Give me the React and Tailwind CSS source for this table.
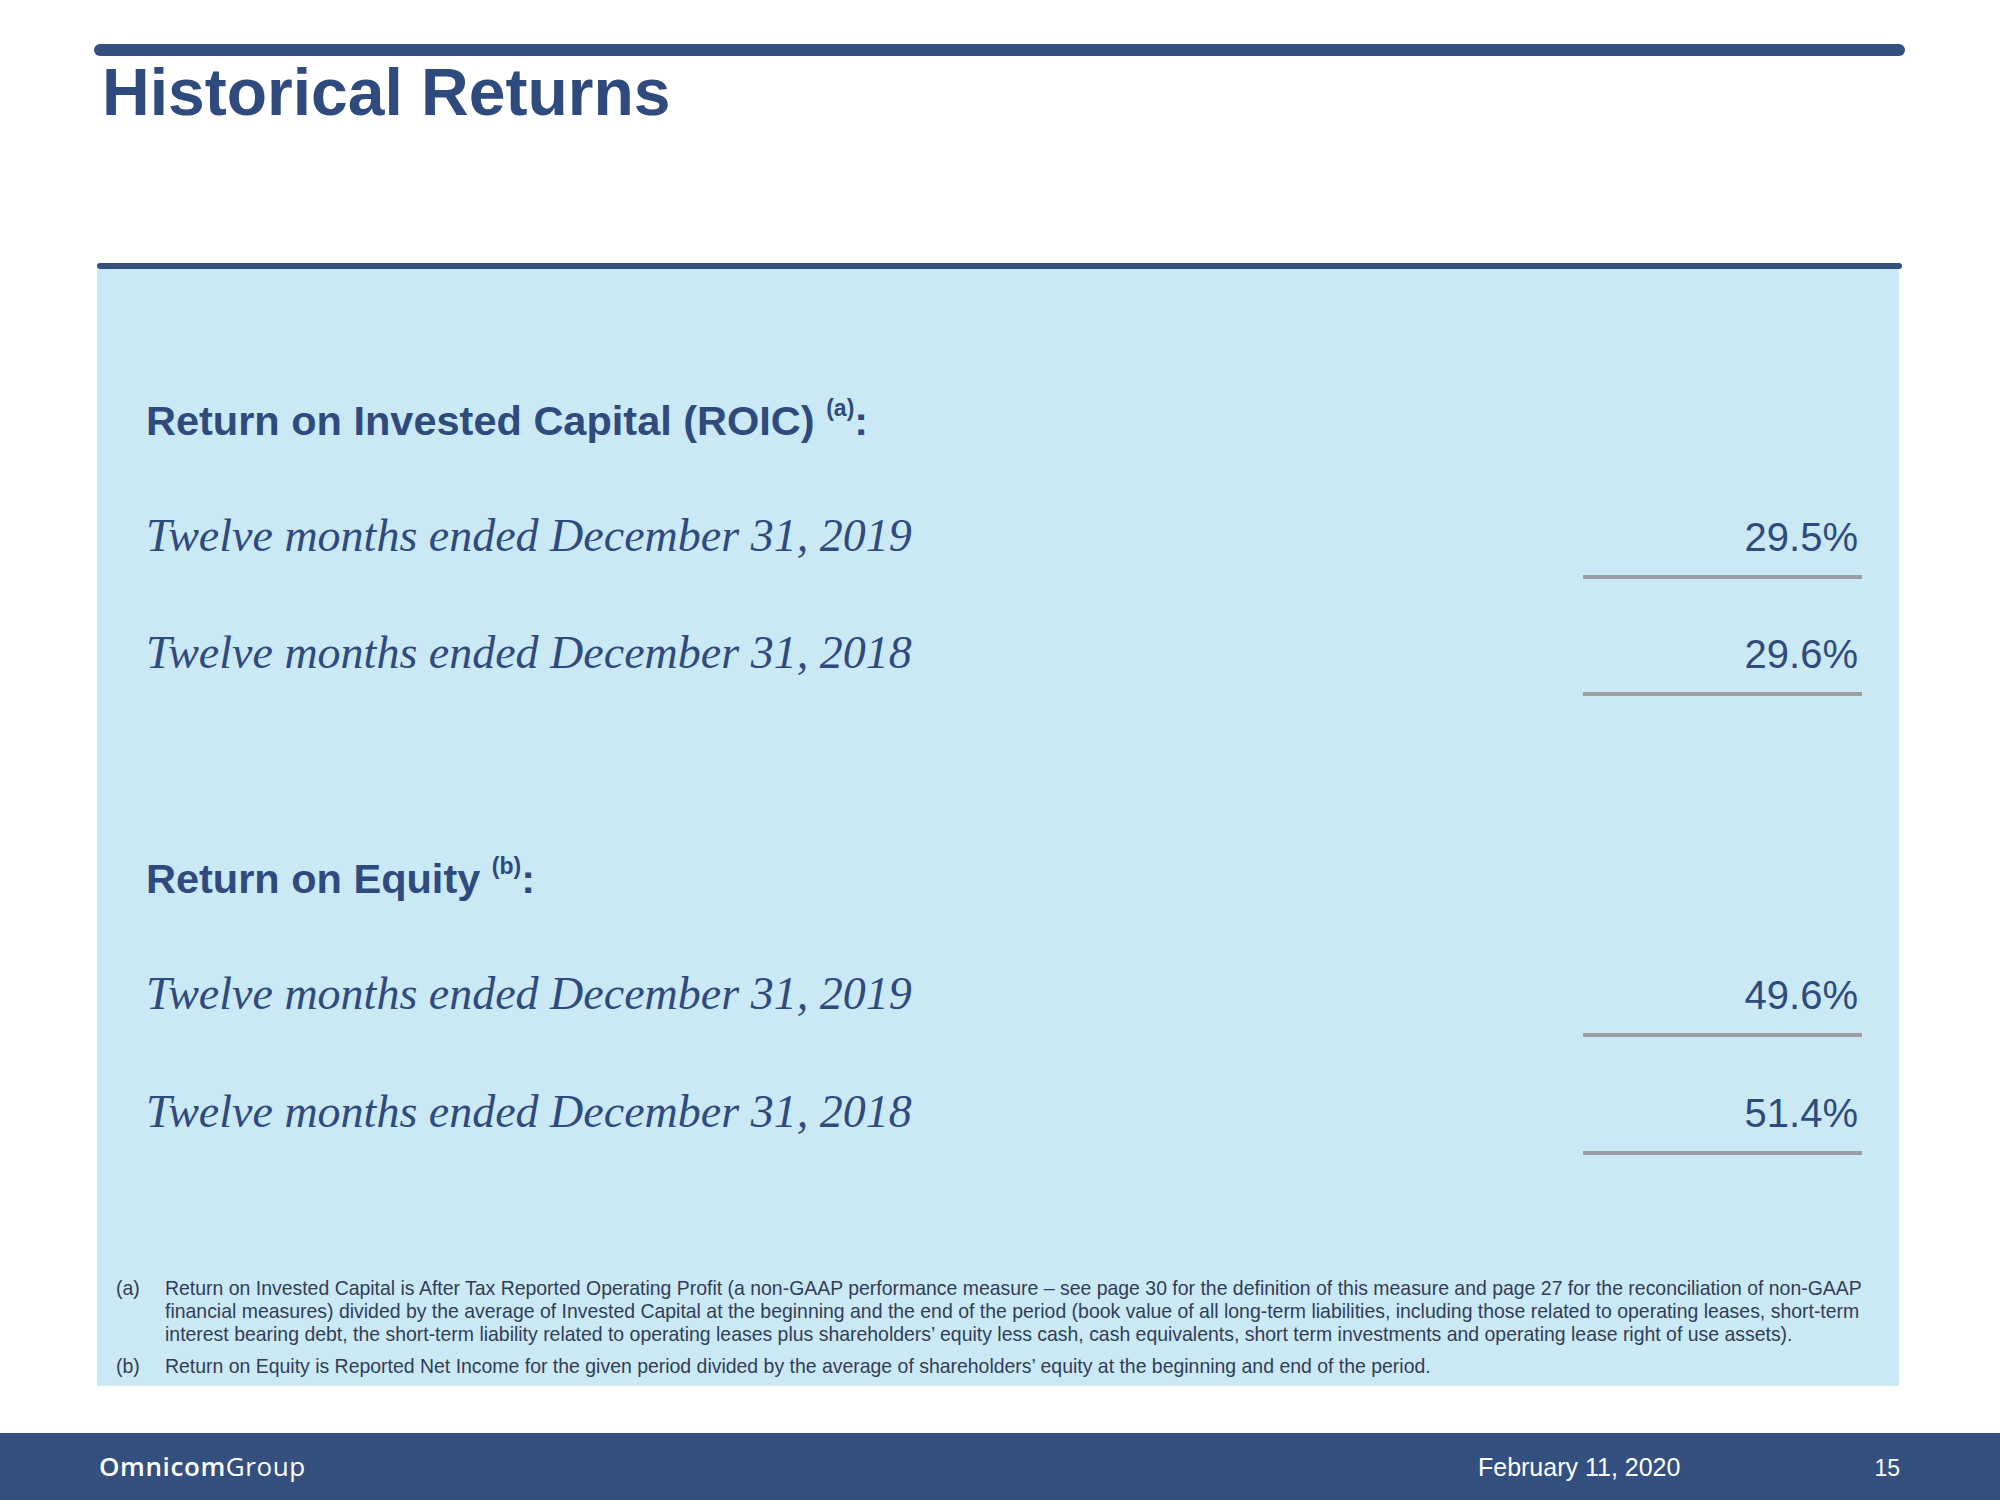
import React from "react";

const SANS = { fontFamily: '"Liberation Sans", Arial, sans-serif' };
const SERIF = { fontFamily: '"Liberation Serif", "Times New Roman", serif' };
const LOGO = { fontFamily: '"Open Sans", "Noto Sans", sans-serif' };

function Row({ label, value, className = "" }) {
  return (
    <div className={"flex items-baseline justify-between " + className}>
      <div className="text-[46px] leading-[36px] italic text-[#2f4b7e] whitespace-nowrap" style={SERIF}>
        {label}
      </div>
      <div className="w-[279px] flex flex-col">
        <div className="text-[40px] leading-[40px] text-[#2f4b7e] text-right pr-[4px]" style={SANS}>
          {value}
        </div>
        <div className="mt-[18px] h-[4px] bg-[#9a9fa3]" />
      </div>
    </div>
  );
}

function Footnote({ tag, lines, className = "" }) {
  return (
    <div className={"flex " + className}>
      <div className="w-[49px] shrink-0">{tag}</div>
      <div className="whitespace-nowrap">
        {lines.map((l, i) => (
          <div key={i}>{l}</div>
        ))}
      </div>
    </div>
  );
}

export default function App() {
  return (
    <div className="w-[2000px] h-[1500px] bg-white flex flex-col" style={SANS}>
      <div className="mt-[44px] ml-[94px] w-[1811px] h-[12px] rounded-full bg-[#34507f]" />
      <h1 className="ml-[102px] mt-[3px] text-[66px] leading-[66px] font-bold text-[#2f4b7e]">
        Historical Returns
      </h1>
      <div className="mt-[138px] ml-[97px] w-[1805px] h-[6px] rounded-full bg-[#34507f]" />
      <div className="ml-[97px] w-[1802px] h-[1117px] bg-[#cbe9f5] flex flex-col">
        <div className="pl-[49px] pr-[37px] pt-[128px]">
          <div className="text-[41.5px] leading-[48px] font-bold text-[#2f4b7e] whitespace-nowrap">
            Return on Invested Capital (ROIC){" "}
            <span className="relative -top-[19px] text-[23px] font-bold">(a)</span>:
          </div>
          <Row className="mt-[66px]" label="Twelve months ended December 31, 2019" value="29.5%" />
          <Row className="mt-[55px]" label="Twelve months ended December 31, 2018" value="29.6%" />

          <div className="mt-[159px] text-[41.5px] leading-[48px] font-bold text-[#2f4b7e] whitespace-nowrap">
            Return on Equity{" "}
            <span className="relative -top-[19px] text-[23px] font-bold">(b)</span>:
          </div>
          <Row className="mt-[66px]" label="Twelve months ended December 31, 2019" value="49.6%" />
          <Row className="mt-[56px]" label="Twelve months ended December 31, 2018" value="51.4%" />
        </div>

        <div className="mt-auto pl-[19px] pb-[8px] text-[19.45px] leading-[23px] text-[#313d56]">
          <Footnote
            tag="(a)"
            lines={[
              "Return on Invested Capital is After Tax Reported Operating Profit (a non-GAAP performance measure – see page 30 for the definition of this measure and page 27 for the reconciliation of non-GAAP",
              "financial measures) divided by the average of Invested Capital at the beginning and the end of the period (book value of all long-term liabilities, including those related to operating leases, short-term",
              "interest bearing debt, the short-term liability related to operating leases plus shareholders’ equity less cash, cash equivalents, short term investments and operating lease right of use assets).",
            ]}
          />
          <Footnote
            className="mt-[9px]"
            tag="(b)"
            lines={[
              "Return on Equity is Reported Net Income for the given period divided by the average of shareholders’ equity at the beginning and end of the period.",
            ]}
          />
        </div>
      </div>

      <div className="mt-auto h-[67px] bg-[#34507f] flex items-baseline pt-[21px] pl-[99px] text-white">
        <div className="text-[26px] leading-[24px] tracking-[0.6px]" style={LOGO}>
          <span className="font-semibold">Omnicom</span>
          <span className="font-normal">Group</span>
        </div>
        <div className="ml-auto text-[25px] leading-[24px]">February 11, 2020</div>
        <div className="ml-[194px] mr-[100px] text-[23px] leading-[24px]">15</div>
      </div>
    </div>
  );
}
